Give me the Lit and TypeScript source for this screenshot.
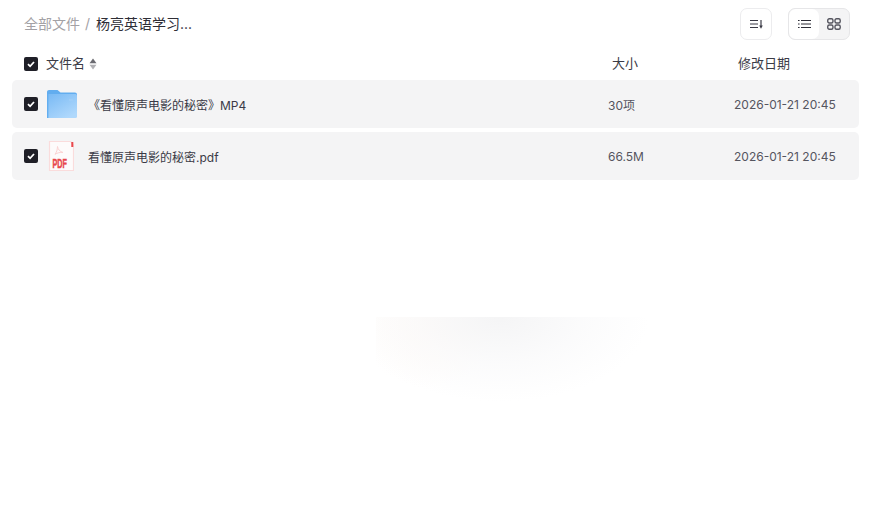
import { LitElement, html, css, svg } from "lit";
import { customElement } from "lit/decorators.js";

const check = html`<span class="cb"><svg width="10" height="10" viewBox="0 0 10 10"><path d="M2 5.200 4.100 7.300 8 3" fill="none" stroke="#fff" stroke-width="1.800"/></svg></span>`;

const folder = html`<svg width="30" height="28" viewBox="0 0 30 28" class="ico">
  <defs><linearGradient id="fg" x1="0" y1="0" x2="0.7" y2="1"><stop offset="0" stop-color="#78b9f4"/><stop offset="1" stop-color="#afd8fc"/></linearGradient></defs>
  <path d="M0 2C0 .9.900 0 2 0h8.500l3 2.500H28c1.100 0 2 .9 2 2v3H0z" fill="#62adef"/>
  <rect x="0" y="4" width="30" height="24" rx="1.500" fill="url(#fg)"/>
  <rect x="0" y="4" width="1.400" height="24" fill="#63aef0"/>
  <rect x="22" y="9" width="4" height="2" fill="#9dcdf8"/>
</svg>`;

const pdf = html`<svg width="26" height="30" viewBox="0 0 26 30" class="ico">
  <path d="M1.500.5H22.500L25.500 3.500V29.500H1.500Z" fill="#fdfbfb" stroke="#fadcdc" stroke-width="1.200"/>
  <rect x="23.300" y="1" width="2" height="5" fill="#e8474c"/>
  <path d="M9.500 5.500c.6 3 2 4.800 5.500 6-3-.3-5.500.2-8 1.800 1.600-2.200 2.400-4.500 2.500-7.800z" fill="none" stroke="#fbd3d3" stroke-width="1"/>
  ${svg`<text transform="translate(4.500 27) scale(.6 1)" font-family="'Liberation Sans',sans-serif" font-size="12" font-weight="700" fill="#e8474c" stroke="#e8474c" stroke-width=".5">PDF</text>`}
</svg>`;

@customElement("app-root")
export class AppRoot extends LitElement {
  static styles = css`
    :host {
      display: block;
      position: relative;
      width: 874px;
      height: 514px;
      overflow: hidden;
      background: #fff;
      font-family: Inter, "Noto Sans CJK SC", sans-serif;
      font-size: 13px;
      color: #3b3b46;
    }
    .top { display: flex; align-items: center; height: 32px; padding: 8px 24px 0 24px; font-size: 14px; }
    .trail { display: flex; align-items: center; line-height: 20px; margin-top: -1px; }
    .crumb { color: #a3a1a5; }
    .sep { color: #a3a1a5; margin: 0 6px 0 5px; font-size: 14px; }
    .cur { color: #2e2e36; }
    .spacer { flex: 1; }
    .btn {
      box-sizing: border-box; width: 32px; height: 32px; margin-right: 16px;
      border: 1px solid #ececee; border-radius: 7px;
      display: flex; align-items: center; justify-content: center;
    }
    .views {
      box-sizing: border-box; width: 62px; height: 32px;
      border: 1px solid #e6e6e8; border-radius: 7px; background: #f4f4f5;
      display: flex; overflow: hidden;
    }
    .view { flex: 1; display: flex; align-items: center; justify-content: center; }
    .view.on { background: #fff; border-radius: 7px; flex: none; width: 30px; }
    .head, .row { display: grid; grid-template-columns: 585px 126px 1fr; align-items: center; }
    .head { height: 40px; margin-left: 12px; padding-top: 8px; box-sizing: border-box; line-height: 18px; }
    .head .label, .head .size, .head .date { padding-bottom: 2px; }
    .name { display: flex; align-items: center; padding-left: 12px; }
    .cb {
      width: 14px; height: 14px; border-radius: 2px; background: #1f1f27;
      display: flex; align-items: center; justify-content: center; flex: none;
    }
    .head .label { margin-left: 8px; color: #3b3b46; }
    .sort { margin-left: 4px; display: block; }
    .head .size { padding-left: 15px; }
    .head .date { padding-left: 15px; }
    .rows { display: flex; flex-direction: column; gap: 4px; margin: 0 15px 0 12px; }
    .row { height: 48px; background: #f4f4f5; border-radius: 5px; font-size: 12px; }
    .ico { display: block; flex: none; }
    .row .folder { margin-left: 9px; }
    .row .pdf { margin-left: 10px; }
    .title { color: #3a3a46; }
    .t1 { margin-left: 11px; }
    .t2 { margin-left: 14px; }
    .row .size { color: #55555f; padding-left: 11px; }
    .row .date { color: #55555f; padding-left: 11px; }
    .blob {
      position: absolute; left: 376px; top: 317px; width: 280px; height: 90px;
      background:
        radial-gradient(ellipse 150px 85px at 44% 0, rgba(244,244,245,.95), rgba(249,249,250,.65) 55%, rgba(255,255,255,0) 100%),
        radial-gradient(ellipse 70px 65px at 18% 6%, rgba(255,245,237,.45), rgba(255,250,245,0) 100%);
    }
  `;

  render() {
    return html`
      <div class="top">
        <div class="trail"><span class="crumb">全部文件</span><span class="sep">/</span><span class="cur">杨亮英语学习...</span></div>
        <span class="spacer"></span>
        <div class="btn">
          <svg width="13" height="10" viewBox="0 0 13 10"><path d="M0 1.500H8M0 5H8M0 8.500H8" stroke="#3b3b46" stroke-width="1.100"/><path d="M11 1V7" stroke="#3b3b46" stroke-width="1.200"/><path d="M9.200 6.500H12.800L11 9.800Z" fill="#3b3b46"/></svg>
        </div>
        <div class="views">
          <div class="view on">
            <svg width="13" height="10" viewBox="0 0 13 10"><path d="M3 1.500H13M3 5H13M3 8.500H13" stroke="#2c2c36" stroke-width="1.100"/><path d="M0 1.500H1.600M0 5H1.600M0 8.500H1.600" stroke="#2c2c36" stroke-width="1.100"/></svg>
          </div>
          <div class="view">
            <svg width="14" height="12" viewBox="0 0 14 12" fill="none" stroke="#55555f" stroke-width="1.400"><rect x=".75" y=".75" width="5.200" height="4.200" rx="1.500"/><rect x="8" y=".75" width="5.200" height="4.200" rx="1.500"/><rect x=".75" y="7" width="5.200" height="4.200" rx="1.500"/><rect x="8" y="7" width="5.200" height="4.200" rx="1.500"/></svg>
          </div>
        </div>
      </div>
      <div class="head">
        <div class="name">${check}<span class="label">文件名</span>
          <svg class="sort" width="8" height="12" viewBox="0 0 8 12"><path d="M4 .5 7.500 5.200H.5Z" fill="#6a6a70"/><path d="M4 11.500 .5 6.800H7.500Z" fill="#b0b0b4"/></svg>
        </div>
        <div class="size">大小</div>
        <div class="date">修改日期</div>
      </div>
      <div class="rows">
        <div class="row">
          <div class="name">${check}<span class="folder">${folder}</span><span class="title t1">《看懂原声电影的秘密》MP4</span></div>
          <div class="size">30项</div>
          <div class="date">2026-01-21 20:45</div>
        </div>
        <div class="row">
          <div class="name">${check}<span class="pdf">${pdf}</span><span class="title t2">看懂原声电影的秘密.pdf</span></div>
          <div class="size">66.5M</div>
          <div class="date">2026-01-21 20:45</div>
        </div>
      </div>
      <div class="blob"></div>
    `;
  }
}
